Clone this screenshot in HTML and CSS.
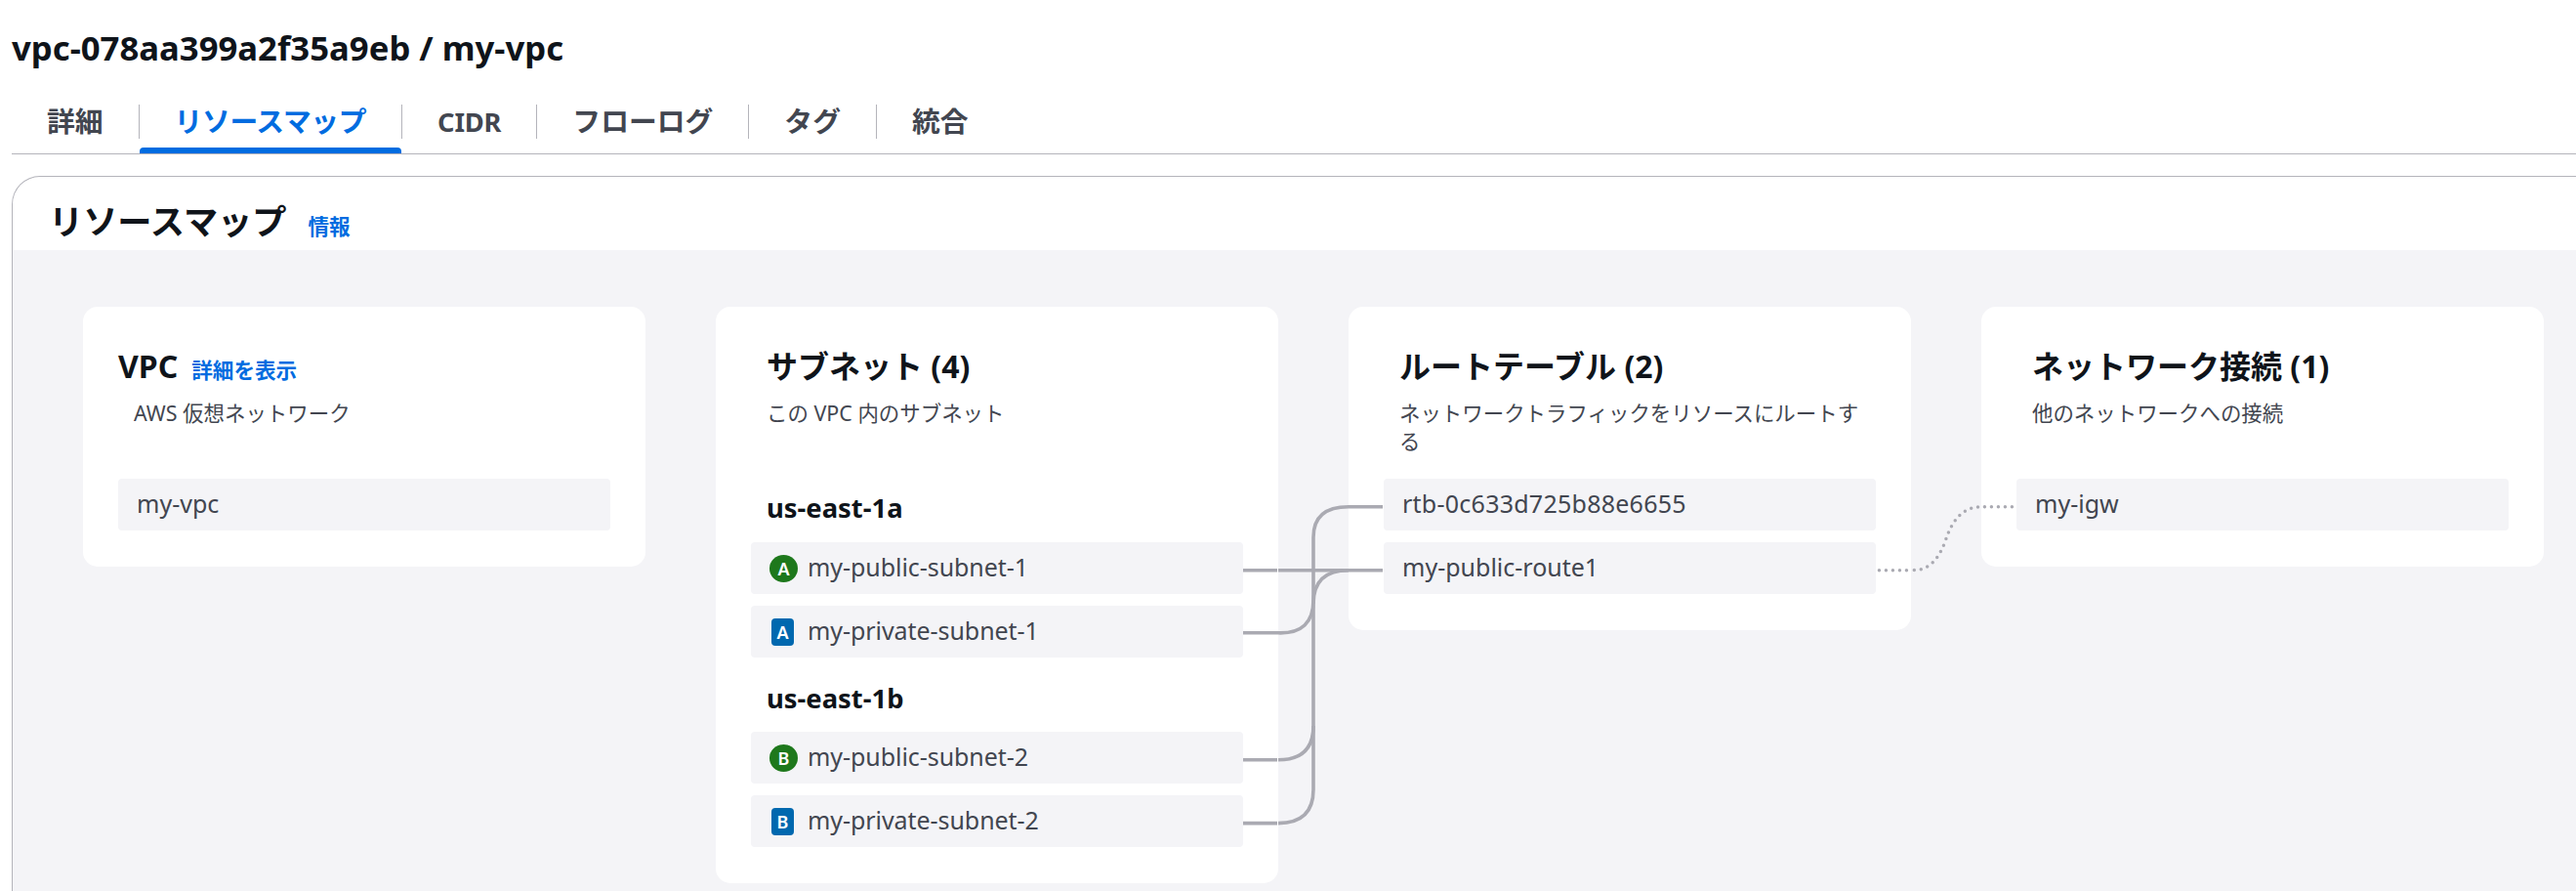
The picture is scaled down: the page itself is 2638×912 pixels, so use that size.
FILE: index.html
```html
<!DOCTYPE html>
<html lang="ja">
<head>
<meta charset="utf-8">
<title>vpc-078aa399a2f35a9eb / my-vpc</title>
<link rel="stylesheet" href="styles.css">
</head>
<body>
<h1 class="page-title">vpc-078aa399a2f35a9eb / my-vpc</h1>
<nav class="tabs">
  <a class="tab">詳細</a>
  <i class="tab-sep"></i>
  <a class="tab tab-active">リソースマップ</a>
  <i class="tab-sep"></i>
  <a class="tab tab-latin">CIDR</a>
  <i class="tab-sep"></i>
  <a class="tab">フローログ</a>
  <i class="tab-sep"></i>
  <a class="tab">タグ</a>
  <i class="tab-sep"></i>
  <a class="tab">統合</a>
</nav>
<section class="panel">
  <header class="panel-head">
    <h2 class="panel-title">リソースマップ</h2>
    <a class="info">情報</a>
  </header>
  <div class="board">
    <article class="card">
      <header class="card-head card-head-vpc">
        <h3 class="card-title">VPC<a class="detail-link">詳細を表示</a></h3>
        <p class="card-desc">AWS 仮想ネットワーク</p>
      </header>
      <div class="rows"><div class="row">my-vpc</div></div>
    </article>
    <article class="card">
      <header class="card-head">
        <h3 class="card-title">サブネット (4)</h3>
        <p class="card-desc">この VPC 内のサブネット</p>
      </header>
      <div class="rows">
        <h4 class="zone">us-east-1a</h4>
        <div class="row row-subnet"><b class="badge public">A</b><span>my-public-subnet-1</span></div>
        <div class="row row-subnet"><b class="badge private">A</b><span>my-private-subnet-1</span></div>
        <h4 class="zone">us-east-1b</h4>
        <div class="row row-subnet"><b class="badge public">B</b><span>my-public-subnet-2</span></div>
        <div class="row row-subnet"><b class="badge private">B</b><span>my-private-subnet-2</span></div>
      </div>
    </article>
    <article class="card">
      <header class="card-head">
        <h3 class="card-title">ルートテーブル (2)</h3>
        <p class="card-desc">ネットワークトラフィックをリソースにルートする</p>
      </header>
      <div class="rows">
        <div class="row row-id">rtb-0c633d725b88e6655</div>
        <div class="row">my-public-route1</div>
      </div>
    </article>
    <article class="card">
      <header class="card-head">
        <h3 class="card-title">ネットワーク接続 (1)</h3>
        <p class="card-desc">他のネットワークへの接続</p>
      </header>
      <div class="rows"><div class="row">my-igw</div></div>
    </article>
    <svg class="links" viewBox="13 256 2625 656" width="2625" height="656" aria-hidden="true">
      <path d="M1273 583.8H1308M1309 583.8H1416"/>
      <path d="M1273 647.8H1309Q1345 649 1345 614M1345 618Q1345 583.8 1381 583.8"/>
      <path d="M1273 777.8H1308M1309 777.8Q1345 777.8 1345 743"/>
      <path d="M1273 842.6H1308M1309 842.6Q1345 842.6 1345 808V550Q1345 518.8 1381 518.8H1416"/>
      <path class="dotted" d="M1924.4 583.8H1955M1960.3 583.6Q1982 583.8 1993 551.3Q2004 518.8 2029 518.8M2032.4 518.8H2062"/>
    </svg>
  </div>
</section>
</body>
</html>
```
FILE: styles.css
```css
* { box-sizing: border-box; }
body {
  margin: 0;
  height: 912px;
  overflow: hidden;
  background: #fff;
  color: #424650;
  font-family: "Noto Sans", "Noto Sans CJK JP", sans-serif;
}
h1, h2, h3, h4, p { margin: 0; }
.page-title {
  padding: 24px 0 0 12px;
  font-size: 34.7px;
  line-height: 50px;
  font-weight: 700;
  color: #0f141a;
}
.tabs {
  display: flex;
  align-items: center;
  height: 66px;
  margin: 18px 0 0 12px;
  border-bottom: 1px solid #b4b4bb;
}
.tab {
  position: relative;
  height: 65px;
  padding: 0 36px;
  line-height: 64px;
  font-size: 28.8px;
  font-weight: 700;
}
.tab-latin { padding-top: 1px; font-size: 27.3px; letter-spacing: -0.2px; }
.tab-sep { width: 1px; height: 35px; background: #b4b4bb; }
.tab-active { color: #006ce0; letter-spacing: -0.4px; }
.tab-active::after {
  content: "";
  position: absolute;
  left: 0;
  right: 0;
  bottom: 0;
  height: 6px;
  border-radius: 4px 4px 0 0;
  background: #006ce0;
}
.panel {
  width: 2700px;
  margin: 22px 0 0 12px;
  border: 1px solid #b4b4bb;
  border-bottom: 0;
  border-radius: 29px 29px 0 0;
}
.panel-head {
  display: flex;
  align-items: baseline;
  gap: 22px;
  height: 75px;
  padding: 16px 0 0 37px;
}
.panel-title { font-size: 35.2px; line-height: 59px; color: #0f141a; }
.info { padding-top: 1px; font-size: 21.6px; font-weight: 700; color: #006ce0; }
.board {
  position: relative;
  display: flex;
  align-items: flex-start;
  gap: 72px;
  height: 656px;
  padding: 58px 0 0 72px;
  background: #f4f4f7;
}
.card {
  flex: none;
  width: 576px;
  padding: 36px 36px 36.7px;
  border-radius: 15px;
  background: #fff;
}
.card-head { height: 140.3px; padding: 0 16px; }
.card-head-vpc { padding: 0; }
.card-title { height: 50px; font-size: 32px; line-height: 50px; color: #0f141a; }
.card-desc { margin-top: 8px; font-size: 21.45px; line-height: 29px; }
.card-head-vpc .card-desc { padding-left: 16px; }
.detail-link { margin-left: 14px; font-size: 21.6px; line-height: 1; color: #006ce0; }
.rows { display: flex; flex-direction: column; gap: 12px; }
.row {
  display: flex;
  height: 52.8px;
  padding-left: 19px;
  border-radius: 4px;
  background: #f4f4f7;
  font-size: 25px;
  line-height: 50px;
}
.row-id { letter-spacing: 0.25px; }
.row-subnet { padding-left: 18px; letter-spacing: -0.06px; }
.zone { height: 52.8px; padding-left: 16px; font-size: 27.4px; line-height: 59px; color: #0f141a; }
.badge {
  flex: none;
  height: 28px;
  color: #fff;
  font-size: 18px;
  font-weight: 600;
  line-height: 29px;
  text-align: center;
}
.public { width: 29px; margin: 13px 10px 0 1px; border-radius: 50%; background: #1e781c; }
.private { width: 23px; margin: 13px 14px 0 3px; border-radius: 4px; background: #0068af; }
.links {
  position: absolute;
  left: 0;
  top: 0;
  fill: none;
  stroke: #aaaab2;
  stroke-width: 3.6;
}
.dotted { stroke-width: 3.5; stroke-linecap: round; stroke-dasharray: 0 7; }
```
